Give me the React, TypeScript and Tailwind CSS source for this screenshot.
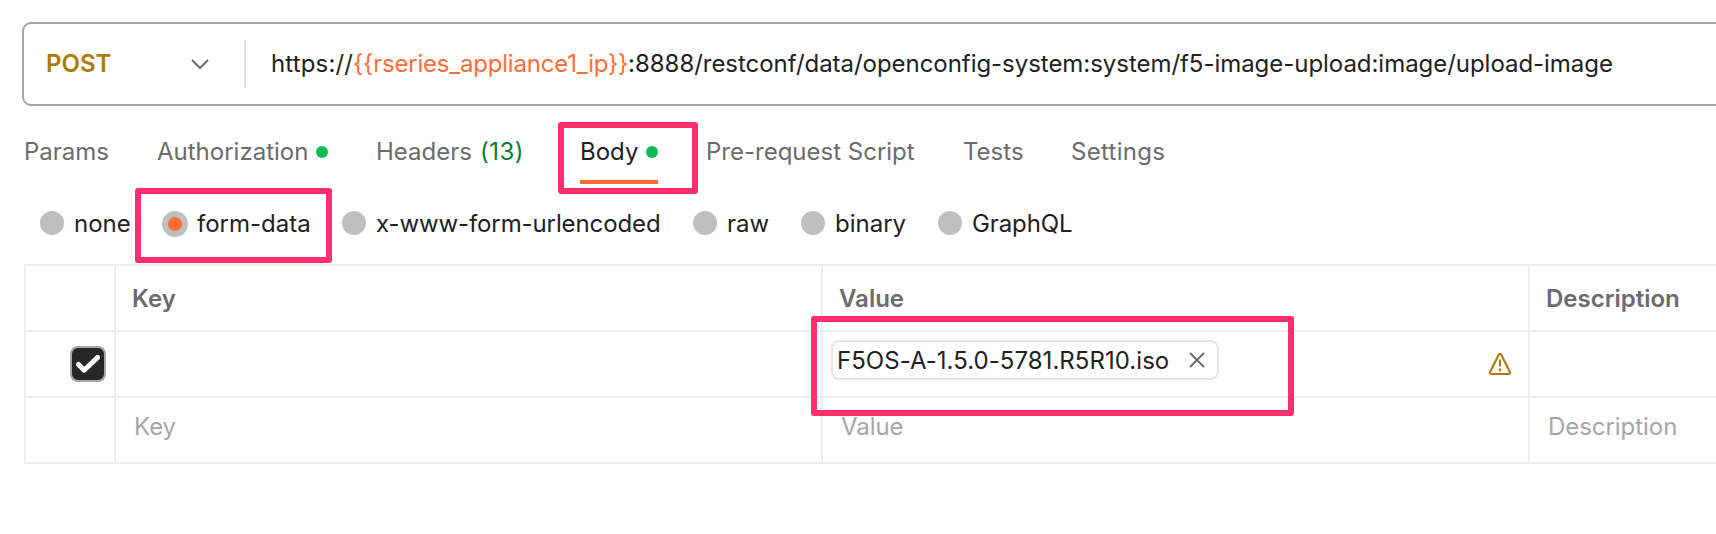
import type { ReactNode } from "react";

type TabProps = { label: string; className: string; count?: string; dot?: boolean; active?: boolean; children?: ReactNode };

function Tab({ label, className, count, dot, active, children }: TabProps) {
  return (
    <div className={`relative flex h-[64px] shrink-0 items-center ${active ? "text-[#212121]" : "text-[#6b6b6b]"} ${className}`}>
      <span>{label}</span>
      {count && <span className="ml-[8px] tracking-[0.5px] text-[#007f31]">{count}</span>}
      {dot && <span className="ml-2 size-3 rounded-full bg-[#0cbb52]" />}
      {active && <span className="absolute bottom-0 left-0 h-1 w-[78px] bg-[#ff6c37]" />}
      {children}
    </div>
  );
}

function Radio({ label, className, checked, children }: { label: string; className: string; checked?: boolean; children?: ReactNode }) {
  return (
    <div className={`relative flex h-[26px] shrink-0 items-center ${className}`}>
      {checked ? (
        <span className="mr-[9px] flex size-[26px] items-center justify-center rounded-full bg-[#bfbfbf]">
          <span className="size-[14px] rounded-full bg-[#ff6c37]" />
        </span>
      ) : (
        <span className="mr-[10px] size-6 self-start rounded-full bg-[#bfbfbf]" />
      )}
      <span>{label}</span>
      {children}
    </div>
  );
}

function Highlight({ className }: { className: string }) {
  return <div className={`pointer-events-none absolute z-10 rounded-[3px] border-6 border-[#ff2f6d] ${className}`} />;
}

const cell = "flex h-[66px] items-center border-r-2 border-b-2 border-[#ededed]";
const heading = "pt-[2px] pl-4 font-semibold text-[#6b6b6b]";
const placeholder = "pb-[6px] pl-[18px] tracking-[-0.05px] text-[#a6a6a6]";

export default function App() {
  return (
    <div className="h-[534px] w-full overflow-hidden bg-white font-['Inter',sans-serif] text-[24px] leading-[30px] whitespace-nowrap text-[#212121]">
      <div className="ml-[22px] pt-[22px]">
        <div className="flex h-[84px] w-[1720px] items-center rounded-[9px] border-2 border-[#a6a6a6]">
          <div className="flex h-12 w-[222px] items-center justify-between border-r-2 border-[#e6e6e6] pr-[35px] pl-[22px]">
            <span className="font-semibold text-[#ad7a03]">POST</span>
            <svg className="h-[11px] w-[18px]" viewBox="0 0 18 11" fill="none" stroke="#6b6b6b" strokeWidth="2">
              <path d="M1 1l8 8 8-8" />
            </svg>
          </div>
          <div className="pl-[25px] tracking-[-0.04px]">
            <span className="tracking-[0.15px]">https://</span>
            <span className="tracking-[-0.21px] text-[#ff6c37]">{"{{rseries_appliance1_ip}}"}</span>
            :8888/restconf/data/openconfig-system:system/f5-image-upload:image/upload-image
          </div>
        </div>
      </div>

      <nav className="mt-[14px] ml-[24px] flex">
        <Tab label="Params" className="w-[133px]" />
        <Tab label="Authorization" dot className="w-[219px]" />
        <Tab label="Headers" count="(13)" className="w-[204px]" />
        <Tab label="Body" dot active className="w-[126px]">
          <Highlight className="top-[2px] -left-[22px] h-[72px] w-[140px]" />
        </Tab>
        <Tab label="Pre-request Script" className="w-[257px]" />
        <Tab label="Tests" className="w-[108px]" />
        <Tab label="Settings" className="w-[120px] tracking-[0.3px]" />
      </nav>

      <div className="mt-[27px] ml-[40px] flex">
        <Radio label="none" className="w-[122px]" />
        <Radio label="form-data" checked className="w-[180px]">
          <Highlight className="-top-[23px] -left-[27px] h-[75px] w-[197px]" />
        </Radio>
        <Radio label="x-www-form-urlencoded" className="w-[351px] tracking-[-0.1px]" />
        <Radio label="raw" className="w-[108px]" />
        <Radio label="binary" className="w-[137px]" />
        <Radio label="GraphQL" className="w-[150px] tracking-[-0.1px]" />
      </div>

      <div className="mt-[27px] ml-[24px] grid w-[1780px] grid-cols-[90px_707px_707px_274px] border-t-2 border-l-2 border-[#ededed]">
        <div className={cell} />
        <div className={`${cell} ${heading}`}>Key</div>
        <div className={`${cell} ${heading}`}>Value</div>
        <div className={`${cell} ${heading}`}>Description</div>

        <div className={`${cell} justify-end pr-2`}>
          <span className="flex size-9 items-center justify-center rounded-[8px] border-2 border-[#a6a6a6] bg-[#262626]">
            <svg className="h-[18px] w-6" viewBox="0 0 24 18" fill="none" stroke="#fff" strokeWidth="5" strokeLinecap="round" strokeLinejoin="round">
              <path d="M2.5 9.5l5.7 5.7L21.5 2.5" />
            </svg>
          </span>
        </div>
        <div className={cell} />
        <div className={`${cell} relative justify-between pr-[17px] pl-2`}>
          <div className="mb-2 flex h-10 w-[388px] items-center justify-between rounded-[8px] border-2 border-[#e6e6e6] pr-3 pl-[4px]">
            <span className="pt-[2px] tracking-[0.04px]">F5OS-A-1.5.0-5781.R5R10.iso</span>
            <svg className="size-4" viewBox="0 0 16 16" fill="none" stroke="#6b6b6b" strokeWidth="2">
              <path d="M1 1l14 14M15 1L1 15" />
            </svg>
          </div>
          <svg className="size-[22px]" viewBox="0 0 22 22" fill="none" stroke="#ad7a03" strokeWidth="2.1" strokeLinejoin="round">
            <path d="M9.7 1.8a1.5 1.5 0 0 1 2.6 0l8.5 17a1.5 1.5 0 0 1-1.3 2.2h-17a1.5 1.5 0 0 1-1.3-2.2z" />
            <path d="M11 6.5v7M11 15.5v2.8" />
          </svg>
          <Highlight className="-top-[16px] -left-[12px] h-[100px] w-[483px]" />
        </div>
        <div className={cell} />

        <div className={cell} />
        <div className={`${cell} ${placeholder}`}>Key</div>
        <div className={`${cell} ${placeholder}`}>Value</div>
        <div className={`${cell} ${placeholder}`}>Description</div>
      </div>
    </div>
  );
}
